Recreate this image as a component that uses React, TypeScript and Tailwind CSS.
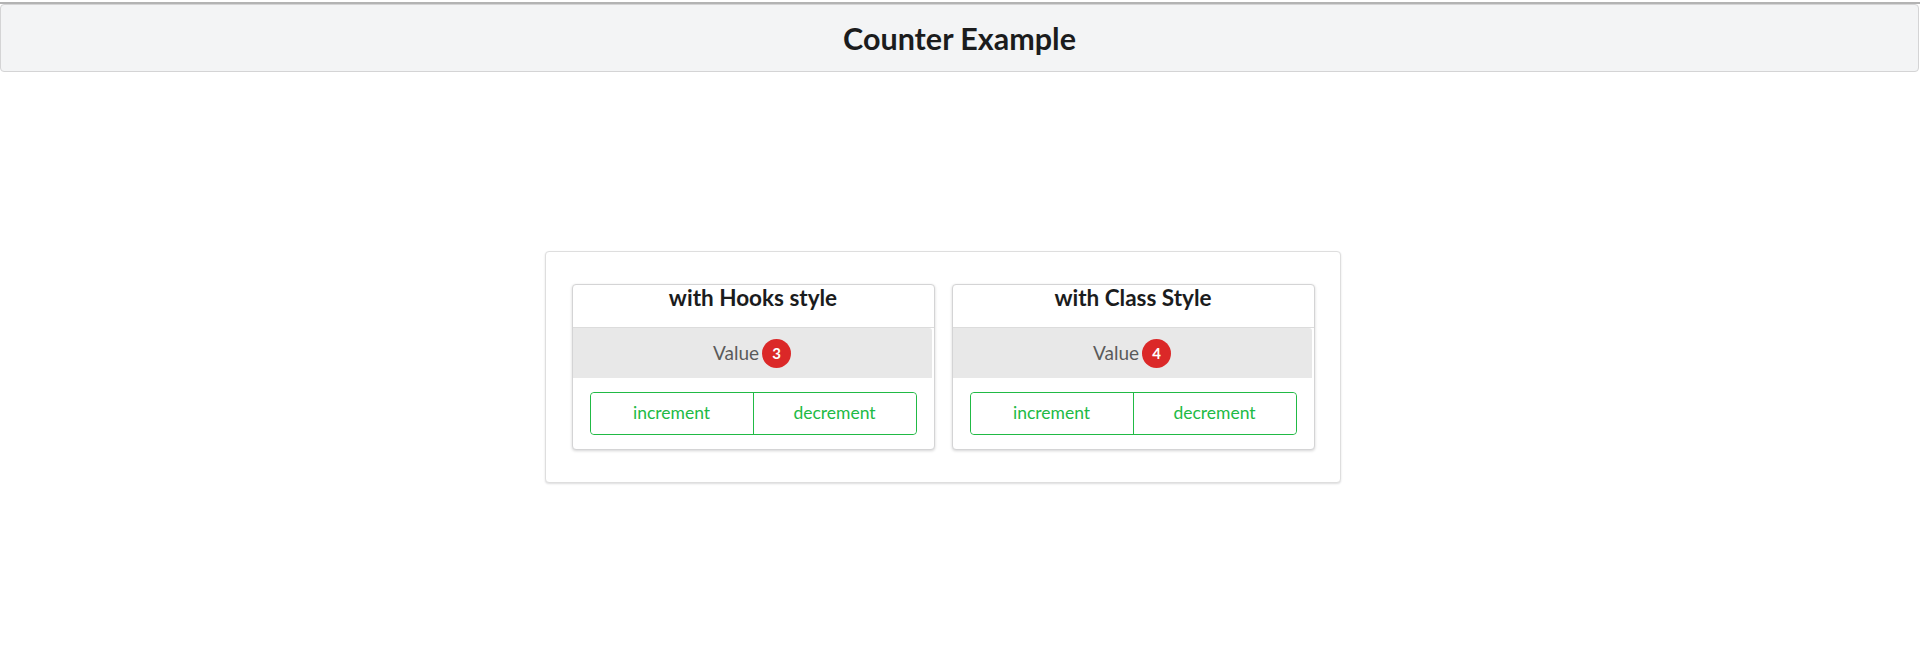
import React, { useState } from "react";

function CounterCard({ title, initial }: { title: string; initial: number }) {
  const [v, setV] = useState(initial);
  return (
    <div className="w-[363px] h-[166px] rounded-[4px] bg-white border border-[#d4d4d5] shadow-[0_1px_3px_0_#d4d4d5] flex flex-col">
      <div className="h-[43px] flex justify-center text-[22.5px] font-bold text-[#1b1c1d] leading-[26px] border-b border-[#dcdcdc]">
        {title}
      </div>
      <div className="h-[50px] mr-[2px] bg-[#e8e8e8] rounded-tr-[3px] flex items-center justify-center gap-[3px]">
        <span className="text-[19px] text-[#5a5a5a]">Value</span>
        <span className="w-[29px] h-[29px] rounded-full bg-[#db2828] text-white text-[15px] font-bold flex items-center justify-center">
          {v}
        </span>
      </div>
      <div className="flex px-[17px] pt-[14px]">
        <div className="flex w-full h-[43px] border border-[#21ba45] rounded-[4px]">
          <button
            onClick={() => setV(v + 1)}
            className="flex-1 text-[17.5px] text-[#21ba45] border-r border-[#21ba45] bg-white rounded-l-[4px]"
          >
            increment
          </button>
          <button
            onClick={() => setV(v - 1)}
            className="flex-1 text-[17.5px] text-[#21ba45] bg-white rounded-r-[4px]"
          >
            decrement
          </button>
        </div>
      </div>
    </div>
  );
}

export default function App() {
  return (
    <div className="min-h-[659px] bg-white pt-[2px] font-['Lato','Open_Sans',sans-serif]">
      <div className="h-[2px] bg-[#b3b3b3]" />
      <div className="h-[68px] mr-[1px] border border-[#d4d4d5] rounded-[4px] bg-[#f3f4f5] flex items-center justify-center">
        <h1 className="text-[30.5px] font-bold text-[#1b1c1d] leading-none">Counter Example</h1>
      </div>
      <div className="flex justify-center pt-[179px] pr-[34px]">
        <div className="w-[796px] h-[232px] rounded-[4px] border border-[#dedede] shadow-[0_1px_2px_0_rgba(34,36,38,0.15)] bg-white flex justify-center gap-[17px] pt-[32px]">
          <CounterCard title="with Hooks style" initial={3} />
          <CounterCard title="with Class Style" initial={4} />
        </div>
      </div>
    </div>
  );
}
